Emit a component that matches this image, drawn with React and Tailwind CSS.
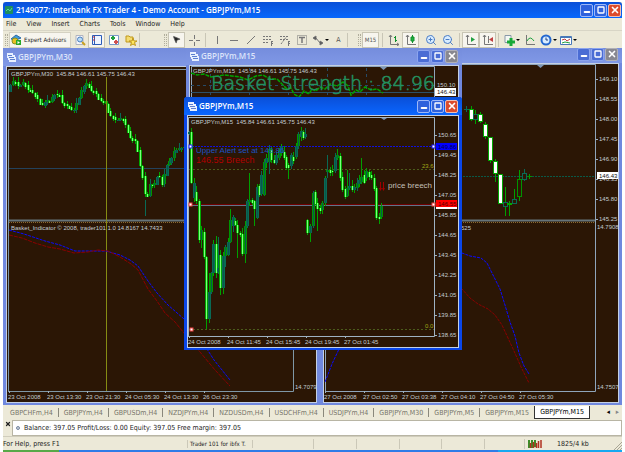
import clsx from 'clsx'
import { MousePointer2, Minus, X, Square, ZoomIn, ZoomOut } from 'lucide-react'

const menus = ['File', 'View', 'Insert', 'Charts', 'Tools', 'Window', 'Help']

const tabs = [
  'GBPCHFm,H4', 'GBPJPYm,H4', 'GBPUSDm,H4', 'NZDJPYm,H4', 'NZDUSDm,H4', 'USDCHFm,H4',
  'USDJPYm,H4', 'GBPJPYm,M30', 'GBPJPYm,M5', 'GBPJPYm,M15', 'GBPJPYm,M15',
]

// close price line of the M30 chart
const m30Line = [
  [8, 91], [11, 84], [14, 81], [18, 86], [21, 84], [24, 83], [27, 90], [32, 92], [36, 97], [40, 104],
  [43, 105], [45, 101], [50, 102], [53, 95], [59, 95], [61, 103], [66, 106], [70, 108], [73, 112],
  [77, 102], [81, 92], [83, 86], [87, 83], [90, 90], [96, 94], [99, 101], [105, 102], [107, 110],
  [111, 117], [115, 120], [122, 119], [126, 127], [129, 137], [133, 140], [136, 141], [139, 163],
  [142, 175], [144, 190], [146, 202], [149, 185], [154, 185], [158, 174], [163, 187], [165, 167],
  [170, 161], [174, 152], [178, 149], [184, 148],
]

// x, high, low, body top, body bottom, d(own) / u(p)
const m15Bars = [
  [189, 131, 135, 132, 134, 'u'], [191, 128, 184, 132, 183, 'd'], [194, 178, 202, 183, 198, 'u'],
  [196, 186, 204, 192, 201, 'd'], [199, 199, 243, 201, 240, 'd'], [201, 226, 248, 230, 240, 'u'],
  [204, 228, 259, 232, 257, 'd'], [206, 256, 329, 257, 319, 'd'], [209, 273, 323, 292, 319, 'u'],
  [211, 272, 294, 273, 292, 'u'], [213, 240, 276, 244, 273, 'u'], [216, 236, 278, 244, 273, 'd'],
  [218, 237, 274, 268, 272, 'u'], [220, 250, 295, 255, 288, 'd'], [223, 252, 294, 256, 288, 'u'],
  [225, 245, 267, 247, 256, 'u'], [228, 238, 256, 242, 255, 'u'], [230, 209, 243, 220, 242, 'u'],
  [233, 215, 232, 217, 226, 'u'], [235, 218, 226, 221, 225, 'd'], [237, 220, 258, 225, 233, 'd'],
  [240, 231, 237, 233, 235, 'd'], [242, 228, 256, 234, 254, 'd'], [245, 221, 263, 226, 254, 'u'],
  [247, 199, 228, 201, 226, 'u'], [249, 173, 206, 200, 202, 'u'], [252, 198, 205, 200, 203, 'd'],
  [254, 200, 226, 201, 209, 'd'], [257, 184, 219, 187, 218, 'u'], [259, 184, 197, 186, 195, 'd'],
  [261, 171, 196, 175, 194, 'u'], [264, 159, 196, 162, 195, 'u'], [266, 154, 168, 158, 163, 'u'],
  [269, 145, 174, 149, 162, 'u'], [271, 147, 163, 150, 160, 'd'], [274, 155, 164, 160, 163, 'd'],
  [276, 152, 165, 155, 163, 'u'], [279, 148, 160, 151, 158, 'u'], [281, 144, 156, 147, 153, 'u'],
  [284, 146, 160, 152, 158, 'd'], [286, 155, 170, 157, 168, 'd'], [288, 163, 179, 165, 168, 'd'],
  [291, 153, 169, 155, 166, 'u'], [293, 152, 164, 157, 161, 'd'], [296, 143, 159, 146, 157, 'u'],
  [298, 132, 149, 134, 146, 'u'], [301, 127, 141, 131, 137, 'u'], [303, 130, 140, 132, 138, 'd'],
  [305, 128, 139, 134, 137, 'u'], [307, 219, 235, 220, 233, 'd'], [310, 224, 242, 226, 233, 'u'],
  [313, 191, 228, 193, 226, 'u'], [315, 190, 205, 192, 204, 'd'], [317, 198, 231, 203, 209, 'd'],
  [320, 205, 214, 208, 211, 'd'], [322, 201, 214, 203, 210, 'u'], [325, 176, 206, 178, 203, 'u'],
  [327, 155, 178, 170, 172, 'u'], [330, 167, 176, 170, 173, 'd'], [332, 165, 176, 171, 172, 'd'],
  [335, 153, 173, 157, 171, 'u'], [337, 149, 160, 155, 158, 'u'], [340, 153, 181, 156, 178, 'd'],
  [342, 172, 192, 177, 190, 'd'], [345, 186, 199, 189, 197, 'd'], [347, 170, 197, 188, 196, 'u'],
  [349, 173, 190, 186, 188, 'u'], [352, 180, 192, 186, 190, 'd'], [354, 184, 193, 187, 190, 'u'],
  [357, 178, 191, 183, 188, 'u'], [359, 175, 187, 180, 184, 'u'], [361, 158, 184, 177, 182, 'u'],
  [364, 170, 184, 175, 183, 'd'], [366, 168, 181, 171, 178, 'u'], [369, 170, 180, 172, 177, 'd'],
  [371, 171, 180, 175, 178, 'd'], [374, 174, 191, 178, 189, 'd'], [376, 186, 220, 188, 218, 'd'],
  [379, 213, 224, 217, 219, 'd'], [381, 203, 219, 206, 217, 'u'],
]

const m1Bars = [
  [466, 106, 112, 109, 110, 'u'], [471, 106, 121, 109, 120, 'd'], [475, 110, 124, 114, 120, 'u'],
  [480, 112, 123, 114, 122, 'd'], [485, 122, 139, 124, 137, 'd'], [490, 137, 163, 137, 161, 'd'],
  [495, 159, 182, 161, 174, 'd'], [500, 174, 204, 174, 204, 'd'], [505, 187, 216, 202, 207, 'u'],
  [509, 201, 216, 203, 205, 'd'], [514, 189, 204, 199, 204, 'u'], [519, 170, 201, 179, 197, 'u'],
  [524, 169, 181, 173, 180, 'u'], [529, 174, 179, 176, 177, 'u'],
]

function levelAt(line, x) {
  const i = Math.max(1, line.findIndex(([px]) => px >= x))
  const [x0, y0] = line[i - 1]
  const [x1, y1] = line[i]
  return y0 + ((y1 - y0) * (x - x0)) / (x1 - x0)
}

function barsFromLine(line, step) {
  const bars = []
  const end = line[line.length - 1][0]
  for (let x = line[0][0] + step, n = 0; x < end; x += step, n++) {
    const open = levelAt(line, x - step)
    const close = levelAt(line, x)
    const top = Math.min(open, close) - (n % 2)
    const bottom = Math.max(open, close) + ((n + 1) % 2)
    const wick = [1, 4, 2, 5, 1, 3][n % 6]
    bars.push([Math.round(x), top - wick, bottom + ((n * 5) % 4), top, bottom, close >= open ? 'd' : 'u'])
  }
  return bars
}

function Candles({ bars, width = 2, bright = '#7dff7d', hollow = '#07594c' }) {
  return bars.map(([x, high, low, top, bottom, dir], i) => (
    <g key={i} shapeRendering="crispEdges">
      <rect x={x} y={high} width="1" height={low - high} fill={dir === 'd' || i % 3 ? '#00a000' : '#0a6a55'} />
      <rect
        x={x - width / 2}
        y={top}
        width={width + 1}
        height={Math.max(1, bottom - top)}
        fill={dir === 'd' ? '#00a800' : i % 2 ? '#009400' : '#0a6a55'}
      />
      <rect
        x={width > 2 ? x - 1 : x}
        y={top + (width > 2 ? 1 : 0)}
        width={width > 2 ? 3 : 1}
        height={Math.max(0, bottom - top - (width > 2 ? 2 : 0))}
        fill={dir === 'd' ? bright : hollow}
      />
    </g>
  ))
}

function Label({ x, y, fill = '#c3ccd2', children }) {
  return <text x={x} y={y} fill={fill} className="text-[6px]">{children}</text>
}

function TimeAxis({ x, y, labels }) {
  return labels.map((label, i) => (
    <g key={label}>
      <path d={`M${x + i * 39 + 1.5} ${y}v2`} stroke="#9fb0bd" />
      <Label x={x + i * 39} y={y + 8}>{label}</Label>
    </g>
  ))
}

function PriceAxis({ x, y, labels }) {
  return labels.map((label, i) => (
    <g key={label}>
      <path d={`M${x} ${y + i * 20 + 0.5}h2`} stroke="#9fb0bd" />
      <Label x={x + 3} y={y + i * 20 + 2}>{label}</Label>
    </g>
  ))
}

function Chart({ x, y, width, height, children }) {
  return (
    <svg
      viewBox={`${x} ${y} ${width} ${height}`}
      width={width}
      height={height}
      className="block bg-[#2b1605] font-['Liberation_Sans',sans-serif]"
    >
      {children}
    </svg>
  )
}

function M30Chart() {
  return (
    <Chart x={7} y={67} width={309} height={335}>
      <path d="M8.5 391V69.5H293.5V391.5H8" fill="none" stroke="#7f97a6" />
      <path d="M9 168.5H293" stroke="#24425c" />
      <Candles bars={barsFromLine(m30Line, 2.44)} />
      <path d="M145.5 200V216" stroke="#0a6a55" />
      <path d="M9 220.5H293" stroke="#66747a" strokeWidth="2" />
      <path d="M9 222.5H293" stroke="#8a6a30" strokeDasharray="1 1" />
      <path d="M106.5 77V391" stroke="#858c14" />
      <path d="M9 230L24 234L45 241L60 245L75 251L92 251L106 251L120 255L130 260L138 266L148 281L157 293L168 305L184 319L200 338L214 360L230 380" fill="none" stroke="#0a0aff" strokeDasharray="3 1" />
      <path d="M9 235L22 238L35 243L48 247L60 249L74 253L88 252L98 250L108 251L120 257L131 264L138 270L148 289L157 301L165 313L175 322L184 333L200 352L215 370L230 386" fill="none" stroke="#8c0000" strokeDasharray="4 1" />
      <Label x={11} y={76}>GBPJPYm,M30&nbsp; 145.84 146.61 145.75 146.43</Label>
      <Label x={11} y={230}>Basket_Indicator © 2008, trader101 1.0 14.8167 14.7433</Label>
      <Label x={295} y={389}>14.7079</Label>
      <TimeAxis x={8} y={391} labels={['23 Oct 2008', '23 Oct 13:30', '23 Oct 21:30', '24 Oct 05:30', '24 Oct 13:30', '26 Oct 23:30']} />
    </Chart>
  )
}

function M1Chart() {
  return (
    <Chart x={324} y={64} width={294} height={338}>
      <path d="M325.5 391V64.5H595.5V391.5H325" fill="none" stroke="#8fa5bb" />
      <path d="M537 65H544L540.5 68Z" fill="#7f97b6" />
      <path d="M325 176.5H595" stroke="#0a5a48" strokeDasharray="2 1" />
      <Candles bars={m1Bars} width={4} bright="#ffffff" hollow="#2b1605" />
      <path d="M325 220.5H595" stroke="#66747a" strokeWidth="2" />
      <path d="M325 222.5H595" stroke="#8a6a30" strokeDasharray="1 1" />
      <path d="M325 382L332 364L339 349L360 300L400 262L440 250L462 253L470 256L481 258L487 263L493 275L500 289L505 305L510 322L515 336L519 353L524 366L529 374" fill="none" stroke="#0a0aff" strokeDasharray="3 1" />
      <path d="M440 270L462 289L470 298L478 304L488 309L495 315L502 325L508 338L514 351L521 367L529 383" fill="none" stroke="#8c0000" strokeDasharray="3 1" />
      <PriceAxis x={596} y={79} labels={['149.10', '148.55', '148.00', '147.45', '146.90', '146.35', '145.80', '145.25']} />
      <rect x="597" y="172" width="21" height="7" fill="#fff" />
      <Label x={599} y={178} fill="#111">146.43</Label>
      <Label x={597} y={229}>14.7908</Label>
      <Label x={597} y={389}>14.7507</Label>
      <Label x={461} y={230}>525</Label>
      <TimeAxis x={324} y={391} labels={['27 Oct 2008', '27 Oct 02:50', '27 Oct 03:38', '27 Oct 04:10', '27 Oct 04:50', '27 Oct 05:30']} />
    </Chart>
  )
}

function StrengthChart() {
  return (
    <Chart x={190} y={66} width={268} height={60}>
      <path d="M191.5 126V66.5H434.5V126" fill="none" stroke="#8fa5bb" />
      <path d="M380 67H387L383.5 70Z" fill="#7f97b6" />
      <path d="M210.5 68V97M249.5 68V97M288.5 68V97M327.5 68V97M366.5 68V97M191 85.5H434" stroke="#274a66" strokeDasharray="3 3" />
      <path d="M191 92.5H434" stroke="#2c5068" />
      <path d="M191 73L197 75L204 74L211 77L224 75L240 77L248 80L256 76L263 75L270 79L277 79L282 84L287 89L291 88L294 94L299 97L304 91L309 94L312 89L316 91L320 87L325 89L330 84L337 86L343 82L348 86L351 95L356 90L360 92L365 87L371 90L377 89L383 93" fill="none" stroke="#00a400" strokeWidth="1.5" strokeDasharray="4 1" />
      <text x="211" y="90" fill="#23905f" stroke="#23905f" strokeWidth="0.6" className="font-['DejaVu_Sans',sans-serif] text-[19px] font-extralight">
        Basket Strength : 84.96
      </text>
      <Label x={193} y={73}>GBPJPYm,M15&nbsp; 145.84 146.61 145.75 146.43</Label>
      <Label x={437} y={87}>150.10</Label>
      <rect x="435" y="88" width="21" height="8" fill="#fff" />
      <Label x={437} y={94} fill="#111">146.43</Label>
    </Chart>
  )
}

function M15Chart() {
  return (
    <Chart x={188} y={116} width={270} height={231}>
      <path d="M188.5 336V117.5H434.5V336.5H188" fill="none" stroke="#9fb3c4" />
      <path d="M381 118H387L384 120Z" fill="#7f97b6" />
      <path d="M189 169.5H434M189 329.5H434" stroke="#4c5c1c" strokeDasharray="2 2" />
      <path d="M189 146.5H434" stroke="#1010e0" strokeDasharray="2 1" />
      <path d="M189 204.5H434" stroke="#700000" />
      <path d="M189 205.5H434" stroke="#60748c" />
      <Candles bars={m15Bars} />
      <text x="196" y="153" fill="#1c54c4" className="text-[8px]">Upper Alert set at 149.86</text>
      <text x="196" y="163" fill="#b00000" className="text-[9px]">146.55 Breech</text>
      <path d="M380.5 182V188M383.5 182V188" stroke="#a00000" />
      <path d="M379 188L380.5 191L382 188M382 188L383.5 191L385 188" fill="#a00000" />
      <text x="388" y="188" fill="#c4c0ba" className="text-[8px]">price breech</text>
      <rect x="189" y="145" width="3" height="3" fill="#fff" stroke="#2020ff" />
      <rect x="432" y="145" width="3" height="3" fill="#fff" stroke="#2020ff" />
      <rect x="189" y="203" width="3" height="3" fill="#fff" stroke="#f04040" />
      <rect x="432" y="203" width="3" height="3" fill="#fff" stroke="#f04040" />
      <rect x="190" y="328" width="3" height="3" fill="#fff" stroke="#f04040" />
      <Label x={422} y={168} fill="#a0a818">23.6</Label>
      <Label x={425} y={328} fill="#a0a818">0.0</Label>
      <Label x={191} y={124}>GBPJPYm,M15&nbsp; 145.84 146.61 145.75 146.43</Label>
      <PriceAxis x={435} y={135} labels={['150.65', '149.45', '148.25', '147.05', '145.85', '144.65', '143.45', '142.25', '141.05', '139.85', '138.65']} />
      <rect x="436" y="143" width="21" height="7" fill="#0000ff" />
      <Label x={438} y={149} fill="#000050">149.86</Label>
      <rect x="436" y="206" width="21" height="3" fill="#fff" />
      <rect x="436" y="200" width="21" height="7" fill="#ff0000" />
      <Label x={438} y={206} fill="#500000">146.55</Label>
      <TimeAxis x={188} y={336} labels={['24 Oct 2008', '24 Oct 11:45', '24 Oct 15:45', '24 Oct 19:45', '27 Oct 01:45']} />
    </Chart>
  )
}

function CaptionButtons({ active }) {
  const box = 'flex h-[13px] w-[13px] items-center justify-center rounded-[2px] border text-white'
  return (
    <div className="flex gap-px">
      <button aria-label="Minimize" className={clsx(box, active ? 'border-[#9db8f8] bg-[#2f62dc]' : 'border-[#8ca4ee] bg-[#4a6cd4]')}>
        <Minus className="mt-1 h-2 w-2" strokeWidth={6} />
      </button>
      <button aria-label="Maximize" className={clsx(box, active ? 'border-[#9db8f8] bg-[#2f62dc]' : 'border-[#8ca4ee] bg-[#4a6cd4]')}>
        <Square className="h-2 w-2" strokeWidth={4} />
      </button>
      <button aria-label="Close" className={clsx(box, active ? 'border-[#f0c0b4] bg-[#dc4c2c]' : 'border-[#b0b0b8] bg-[#888890]')}>
        <X className="h-[10px] w-[10px]" strokeWidth={4} />
      </button>
    </div>
  )
}

function ChartIcon() {
  return (
    <svg viewBox="0 0 9 9" className="h-[9px] w-[9px] shrink-0">
      <path d="M0 0H6V2H8V4H9V9H2V7H1V5H0Z" fill="#e8f0ff" />
      <path d="M1 2.5H5M2 4.5H7M3 6.5H8" stroke="#5b7fd0" />
    </svg>
  )
}

function ChartWindow({ title, active, className, children }) {
  return (
    <section
      className={clsx(
        'absolute overflow-hidden rounded-t-[3px] px-[3px] pb-[2px]',
        active ? 'bg-[#0a46e8]' : 'bg-[#7088de]',
        className,
      )}
    >
      <header
        className={clsx(
          '-mx-[3px] flex h-[18px] items-center justify-between pr-1 pl-[4px]',
          active ? 'bg-linear-to-b from-[#0a4fd8] to-[#0a66ff]' : 'bg-linear-to-b from-[#748cdc] to-[#8098e6]',
        )}
      >
        <div className="flex items-center gap-[2px]">
          <ChartIcon />
          <h2 className={clsx("font-['Open_Sans',sans-serif] text-[8px] font-semibold", active ? 'text-white' : 'text-[#dce4fa]')}>
            {title}
          </h2>
        </div>
        <CaptionButtons active={active} />
      </header>
      <div className="border border-[#c4d0e4]">{children}</div>
    </section>
  )
}

function Tool({ label, on, wide, children }) {
  return (
    <button
      aria-label={label}
      className={clsx(
        'flex h-[16px] shrink-0 items-center justify-center border text-[#555]',
        wide ? 'w-[20px]' : 'w-[17px]',
        on ? 'border-[#c8c5b4] bg-[#f7f5ee]' : 'border-transparent',
      )}
    >
      {children}
      {wide && <span className="ml-px border-x-2 border-t-2 border-x-transparent border-t-black" />}
    </button>
  )
}

function Glyph({ children }) {
  return <svg viewBox="0 0 12 12" className="h-[12px] w-[12px] shrink-0" fill="none" stroke="#777">{children}</svg>
}

function Divider() {
  return <span className="h-[14px] w-px shrink-0 border-l border-[#c9c6b6]" />
}

function Grip() {
  return <span className="mr-px h-[12px] w-[3px] shrink-0 border-x border-dotted border-[#b0ad9c]" />
}

function Toolbar() {
  return (
    <div className="flex h-[18px] items-center overflow-hidden border-t border-[#d8d5c6] pl-[2px]">
      <Grip />
      <button className="flex h-[16px] w-[62px] shrink-0 items-center gap-[2px] border border-[#d4d1c2] bg-[#f7f5ee] text-[6px] whitespace-nowrap">
        <Glyph>
          <path d="M1 5L6 1L11 4L6 6Z" fill="#3f9ad8" stroke="#2a6ba8" />
          <circle cx="5" cy="7" r="3" fill="#e8c020" stroke="#8a9020" />
          <path d="M6 6H11V11H6Z" fill="#28a828" stroke="none" />
          <path d="M7.5 7L10 8.5L7.5 10Z" fill="#fff" stroke="none" />
        </Glyph>
        Expert Advisors
      </button>
      <Tool label="Market watch">
        <Glyph>
          <path d="M2 1.5H9V10.5H2Z" fill="#f4f6fa" stroke="#b0b4c0" />
          <circle cx="6" cy="5.5" r="2.5" fill="#bcdcf4" stroke="#4a80c0" />
          <path d="M8 8L11 11" stroke="#c8a020" strokeWidth="2" />
        </Glyph>
      </Tool>
      <Tool label="Navigator" on>
        <Glyph>
          <path d="M1.5 1.5H10.5V10.5H1.5Z" fill="#eef4ff" stroke="#2c5cb8" />
          <path d="M3.5 2V10" stroke="#2c5cb8" />
          <path d="M2 3H4M2 6H4" stroke="#d03030" />
        </Glyph>
      </Tool>
      <Tool label="Terminal">
        <Glyph>
          <path d="M1.5 1.5H10.5V10.5H1.5Z" fill="#fff" stroke="#7898c8" />
          <path d="M3 4H7M5 2V6" stroke="#20a040" strokeWidth="2" />
          <path d="M6 8H10M8 6V10" stroke="#d05050" strokeWidth="2" />
        </Glyph>
      </Tool>
      <Tool label="Strategy tester">
        <Glyph>
          <path d="M1 2H4L5 3H8V8H1Z" fill="#f4dc70" stroke="#c0981c" />
          <path d="M8 4L9 7H12L9.500 8.500L10.500 11.500L8 10L5.500 11.500L6.500 8.500L4 7H7Z" fill="#ffe860" stroke="#c0981c" />
        </Glyph>
      </Tool>
      <Divider />
      <span className="w-[24px] shrink-0" />
      <Grip />
      <Tool label="Cursor" on><MousePointer2 className="h-[9px] w-[9px]" fill="#222" /></Tool>
      <Tool label="Crosshair"><Glyph><path d="M6.500 1V5M6.500 8V12M1 6.500H5M8 6.500H12" /></Glyph></Tool>
      <span className="w-[3px] shrink-0" />
      <Divider />
      <span className="w-[2px] shrink-0" />
      <Tool label="Vertical line"><Glyph><path d="M6.500 2V10" /></Glyph></Tool>
      <Tool label="Horizontal line"><Glyph><path d="M2 6.500H10" /></Glyph></Tool>
      <Tool label="Trendline"><Glyph><path d="M2 10L10 2" /></Glyph></Tool>
      <Tool label="Channel"><Glyph><path d="M1 2.500H10M1 5.500H10M1 8.500H7" strokeDasharray="2 1" /><path d="M9.500 7V12M9 7.500H11M9 9.500H11" /></Glyph></Tool>
      <Tool label="Fibonacci"><Glyph><path d="M1 2.500H10M1 5.500H10M2 10L8 2" strokeDasharray="2 1" /><path d="M9.500 7V12M9 7.500H11M9 9.500H11" /></Glyph></Tool>
      <Tool label="Text label"><Glyph><path d="M1.500 1.500H10.500V10.500H1.500Z" strokeDasharray="1 1" /><path d="M3 3.500H9M6 3V9" strokeWidth="1.500" /></Glyph></Tool>
      <Tool label="Arrows" wide><Glyph><path d="M1 4L4 2V6ZM11 9L8 7V11Z" fill="#444" /><path d="M4 4L8 9" /></Glyph></Tool>
      <Tool label="Text">A</Tool>
      <Divider />
      <span className="w-[10px] shrink-0" />
      <Grip />
      <Tool label="M15" on><span className="text-[6px]">M15</span></Tool>
      <span className="w-[3px] shrink-0" />
      <Divider />
      <span className="w-[2px] shrink-0" />
      <Tool label="Bar chart"><Glyph><path d="M2.500 1V10.500H11M1 3L2.500 1L4 3M9 9L11 10.500L9 12" /><path d="M7.500 2V8M6 3.500H7M8 6.500H9" stroke="#10902c" /></Glyph></Tool>
      <Tool label="Candlesticks" on><Glyph><path d="M2.500 1V10.500H11M1 3L2.500 1L4 3" /><path d="M7.500 1V9" stroke="#10902c" /><path d="M6 3H9V7H6Z" fill="#20b040" stroke="#10902c" /></Glyph></Tool>
      <span className="w-[3px] shrink-0" />
      <Tool label="Zoom in"><ZoomIn className="h-[12px] w-[12px] text-[#4a7cc4]" fill="#d8ecff" /></Tool>
      <Tool label="Zoom out"><ZoomOut className="h-[12px] w-[12px] text-[#4a7cc4]" fill="#d8ecff" /></Tool>
      <span className="w-[3px] shrink-0" />
      <Divider />
      <span className="w-[2px] shrink-0" />
      <Tool label="Auto scroll" on><Glyph><path d="M2.500 1V10.500H11M1 3L2.500 1L4 3" /><path d="M6 3L10 5.500L6 8Z" fill="#20a040" stroke="none" /></Glyph></Tool>
      <Tool label="Chart shift" on><Glyph><path d="M2.500 1V10.500H11M1 3L2.500 1L4 3M6.500 2V9" /><path d="M11 3L7 5.500L11 8Z" fill="#c04040" stroke="none" /></Glyph></Tool>
      <span className="w-[2px] shrink-0" />
      <Divider />
      <span className="w-[2px] shrink-0" />
      <Tool label="Indicators" wide><Glyph><path d="M2 1.500H8V8.500H2Z" fill="#f4f8f4" stroke="#8898a8" /><path d="M4 8H12M8 4V12" stroke="#18a838" strokeWidth="3" /></Glyph></Tool>
      <Tool label="Objects"><Glyph><path d="M2.500 1V10.500H11" /><path d="M3 7Q6 1 10 7" stroke="#20a040" /></Glyph></Tool>
      <Tool label="Periods" wide><Glyph><circle cx="6" cy="6" r="4.500" fill="#d8ecff" stroke="#2468d0" strokeWidth="2" /><path d="M6 3.500V6H8" stroke="#204080" /></Glyph></Tool>
      <Tool label="Templates" wide><Glyph><path d="M.5 2.500H11.500V10.500H.5Z" fill="#fff" stroke="#4878b8" /><path d="M1 3H11" stroke="#4878b8" strokeWidth="2" /><path d="M2 6L5 5L7 7L10 5" stroke="#c04040" /><path d="M2 9L5 8L10 9" stroke="#20a040" /></Glyph></Tool>
    </div>
  )
}

function StatusBar() {
  return (
    <footer className="flex h-[14px] items-center border-t border-[#d0cdbc] whitespace-nowrap">
      <span className="flex-1">For Help, press F1</span>
      <span className="w-[66px] overflow-hidden border-x border-[#cbc8b8] pl-[2px] text-[6px]">Trader 101 for ibfx T.</span>
      <span className="h-[10px] w-[61px] border-r border-[#cbc8b8]" />
      <span className="h-[10px] w-[43px] border-r border-[#cbc8b8]" />
      <span className="h-[10px] w-[43px] border-r border-[#cbc8b8]" />
      <span className="h-[10px] w-[42px] border-r border-[#cbc8b8]" />
      <span className="h-[10px] w-[43px] border-r border-[#cbc8b8]" />
      <span className="h-[10px] w-[40px] border-r border-[#cbc8b8]" />
      <svg viewBox="0 0 15 8" className="ml-[3px] h-[8px] w-[15px]">
        <path d="M1 0V8M4 0V8M7 0V7" stroke="#3c8c28" strokeWidth="2" />
        <path d="M2.500 3V8M5.500 2V8M8.500 3V8M10.500 1V8M13 0V8" stroke="#b03020" strokeWidth="1.500" />
      </svg>
      <span className="w-[70px] pl-[14px]">1825/4 kb</span>
      <svg viewBox="0 0 9 9" className="h-[9px] w-[9px] self-end" stroke="#a8a594">
        <path d="M1 9L9 1M4 9L9 4M7 9L9 7" />
      </svg>
    </footer>
  )
}

export default function App() {
  return (
    <div className="bg-white px-[3px] pt-[2px] font-['DejaVu_Sans_Condensed','DejaVu_Sans',sans-serif] text-[7px] leading-[8px] text-[#222]">
      <div className="bg-[#ece9d8]">
        <header className="flex h-[16px] items-center justify-between overflow-hidden rounded-t-[3px] bg-linear-to-b from-[#0a50d8] to-[#0868fc] pr-px pl-[2px]">
          <div className="flex items-center gap-[3px]">
            <svg viewBox="0 0 8 8" className="h-[8px] w-[8px]">
              <rect width="8" height="8" rx="1" fill="#1f8f5f" />
              <path d="M1 5L3 3L5 5L7 2" fill="none" stroke="#58d89a" />
            </svg>
            <h1 className="font-['Open_Sans',sans-serif] text-[8px] font-semibold whitespace-nowrap text-white">
              2149077: Interbank FX Trader 4 - Demo Account - GBPJPYm,M15
            </h1>
          </div>
          <CaptionButtons active />
        </header>

        <nav className="flex h-[12px] items-center gap-[10px] pl-[3px]">
          {menus.map((menu) => <button key={menu}>{menu}</button>)}
        </nav>

        <Toolbar />

        {/* Chart windows */}
        <main className="relative h-[357px] overflow-hidden bg-[#7088de]">
          <ChartWindow title="GBPJPYm,M30" className="top-0 left-0 w-[317px]"><M30Chart /></ChartWindow>
          <ChartWindow title="GBPJPYm,M1" className="-top-[3px] right-0 left-[317px]"><M1Chart /></ChartWindow>
          <ChartWindow title="GBPJPYm,M15" className="-top-px left-[183px] w-[276px]"><StrengthChart /></ChartWindow>
          <ChartWindow title="GBPJPYm,M15" active className="top-[49px] left-[181px] w-[278px]"><M15Chart /></ChartWindow>
        </main>

        {/* Chart tabs */}
        <div className="flex h-[15px] items-start pl-[2px]">
          {tabs.map((tab, i) => {
            const current = i === tabs.length - 1
            return (
              <button
                key={i}
                className={clsx(
                  'shrink-0 px-[5px]',
                  current ? 'mt-px h-[13px] border border-t-0 border-[#333] bg-white text-black' : 'my-[3px] h-[9px] text-[#77756a]',
                  i < tabs.length - 2 && 'border-r border-[#8a887c]',
                )}
              >
                {tab}
              </button>
            )
          })}
          <div className="my-[3px] ml-auto flex gap-[6px] pr-[3px]">
            <button aria-label="Scroll left" className="text-black">◂</button>
            <button aria-label="Scroll right" className="text-[#888]">▸</button>
          </div>
        </div>

        {/* Account summary */}
        <div className="flex h-[16px]">
          <button aria-label="Close terminal" className="flex w-[9px] justify-center pt-px">
            <X className="h-[6px] w-[6px]" strokeWidth={5} />
          </button>
          <div className="flex flex-1 items-center gap-[4px] border border-[#b8b5a4] bg-white pl-[3px] text-[#222]">
            <span className="h-[4px] w-[4px] rounded-full border border-[#7888a0] bg-[#c8d0dc]" />
            <p>Balance: 397.05 Profit/Loss: 0.00 Equity: 397.05 Free margin: 397.05</p>
          </div>
        </div>

        <StatusBar />
      </div>
      <div className="flex h-[2px]">
        <span className="w-[56px] bg-[#58a848]" />
        <span className="flex-1 bg-[#2f7ce8]" />
        <span className="w-1/5 bg-[#18a8f0]" />
      </div>
    </div>
  )
}
